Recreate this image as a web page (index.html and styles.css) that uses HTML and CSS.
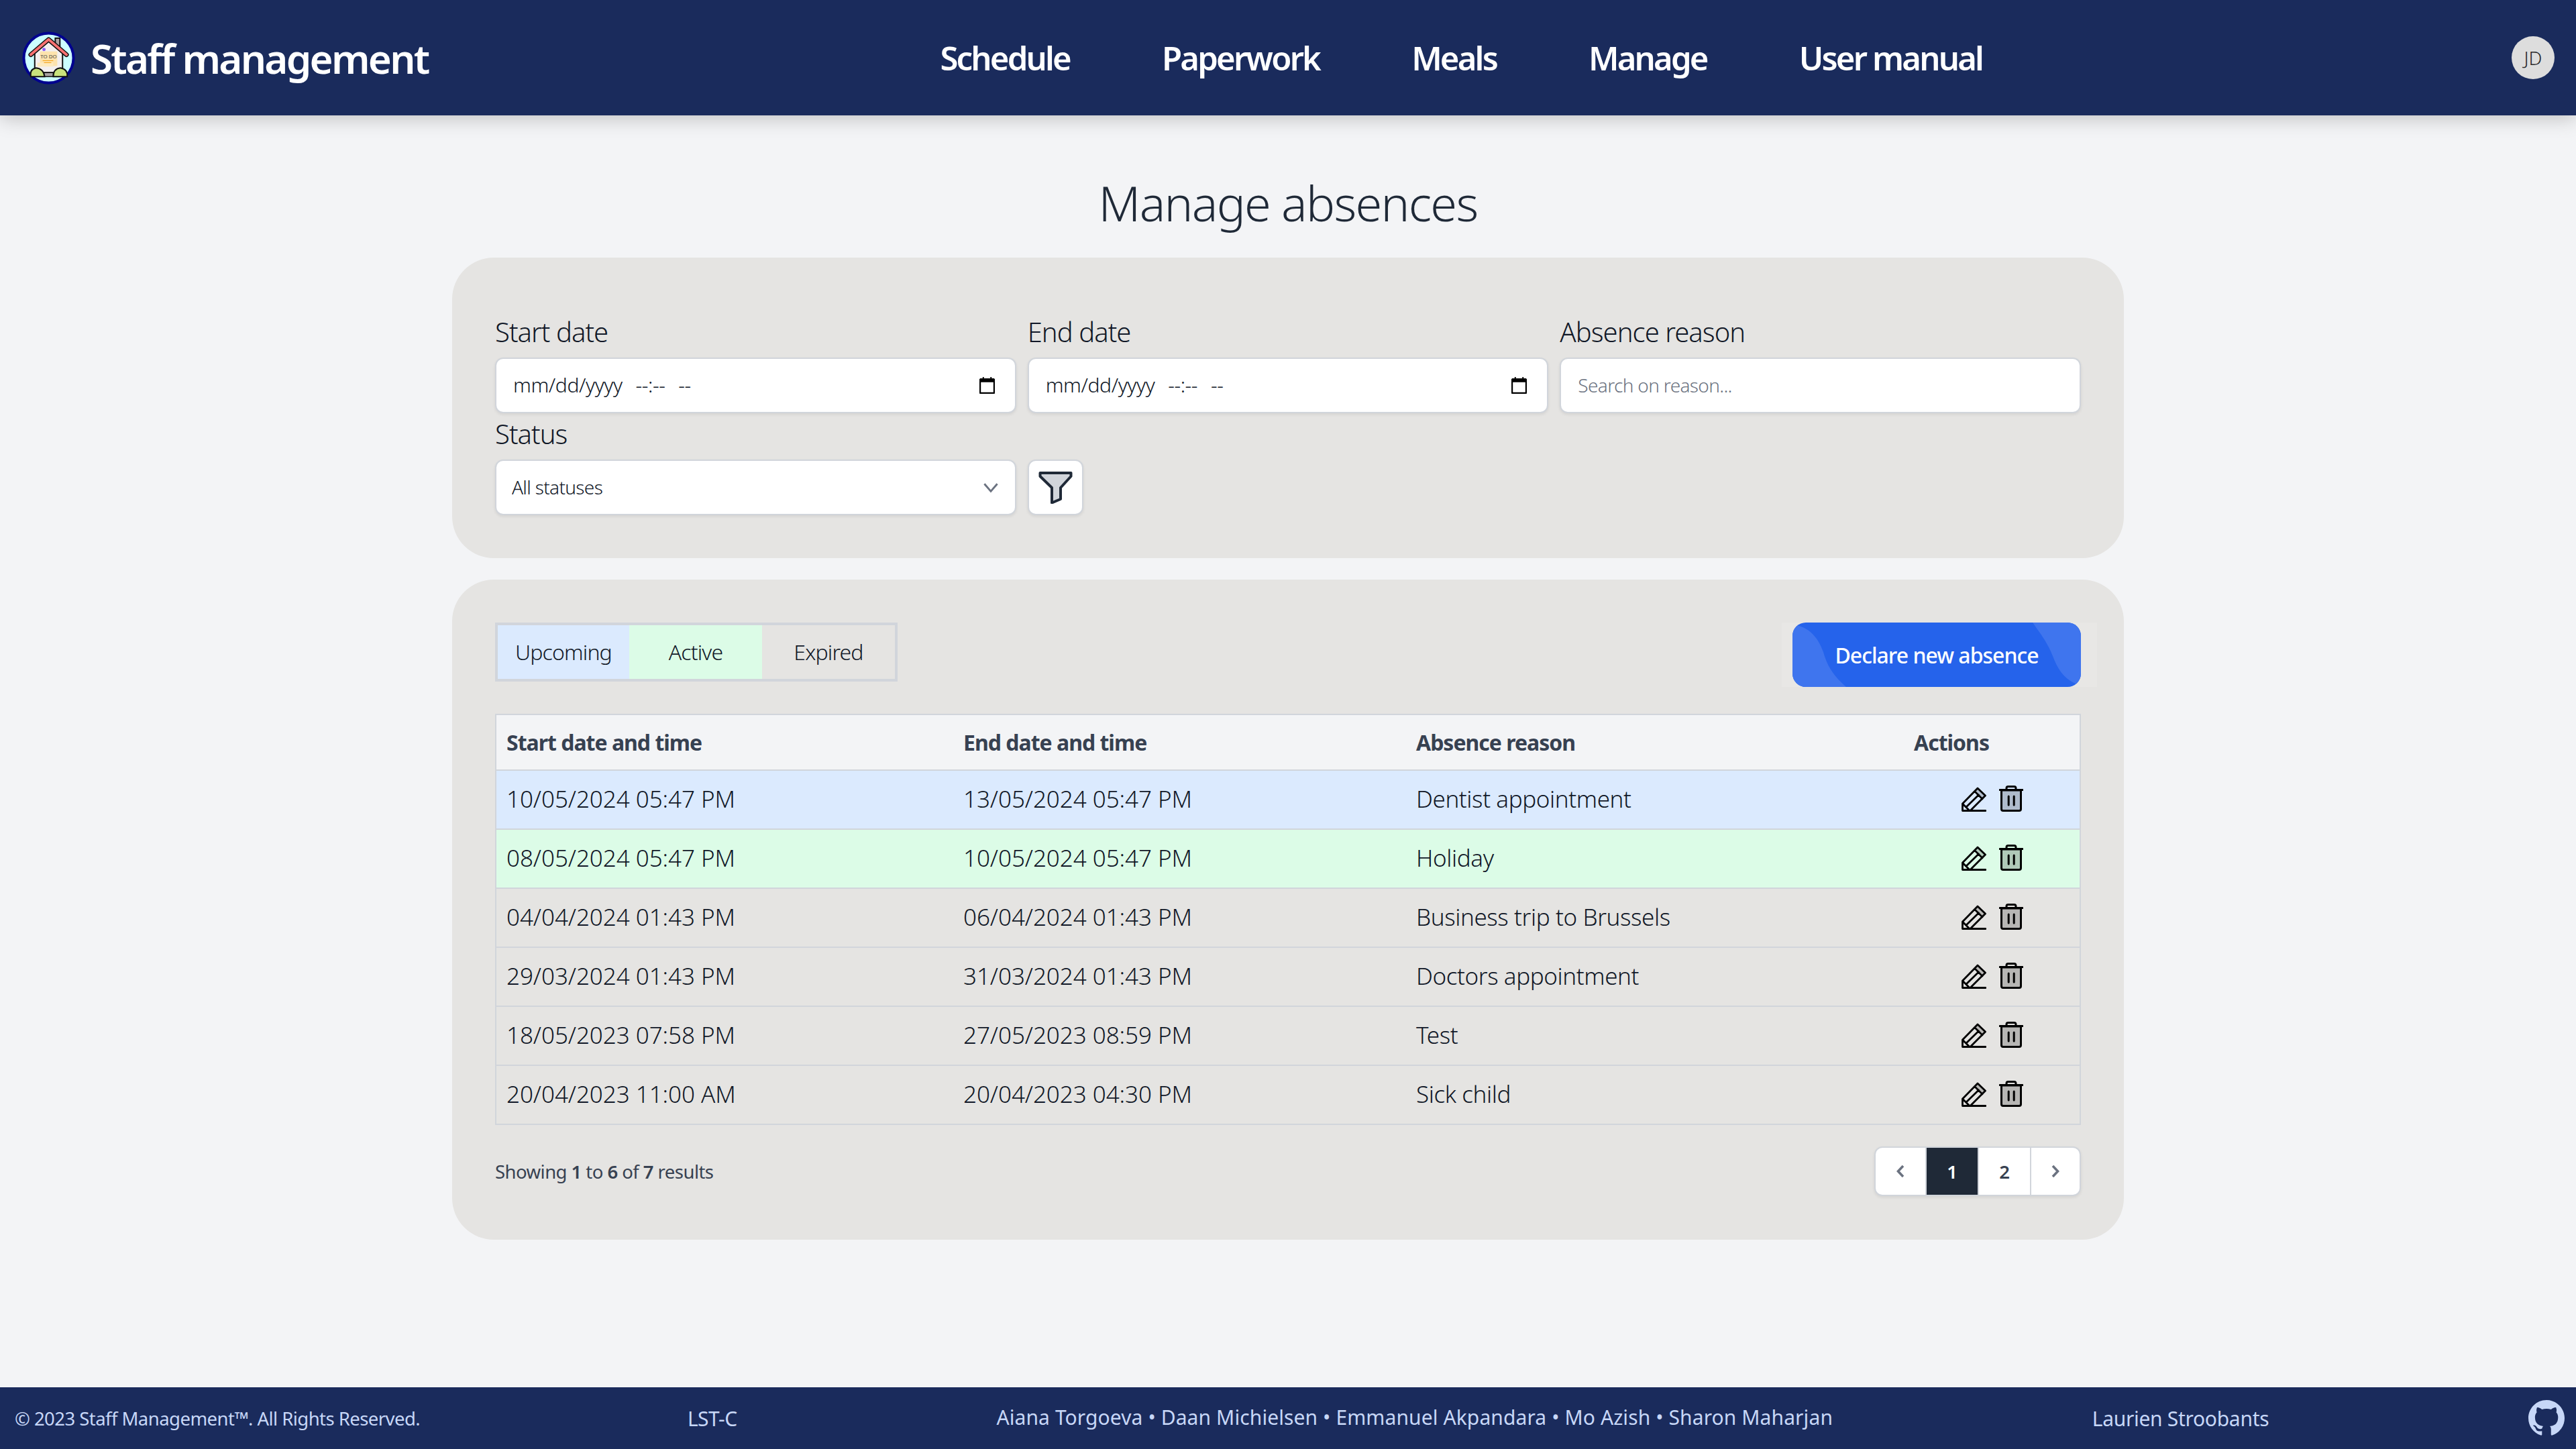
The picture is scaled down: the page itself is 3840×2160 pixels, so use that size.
FILE: index.html
```html
<!DOCTYPE html>
<html lang="en">
<head>
    <meta charset="UTF-8">
    <meta name="viewport" content="width=device-width, initial-scale=1.0">
    <title>Manage absences</title>
    <link rel="stylesheet" href="styles.css">
</head>
<body>
    <svg class="icon-defs" width="0" height="0">
        <symbol id="icon-pencil" viewBox="0 0 37 37">
            <path d="M24 2 L36 13 L31 18 L19.5 6.5Z" fill="rgba(0,0,0,0.2)"/>
            <path d="M1.5 25 L24 2 L35.5 13 L13 35.5 H1.5Z M19.5 6.5 L31 18 M7 30 L25.5 12 M1.5 25 L12 35.5 M13 35.5 H36" fill="none" stroke="#000" stroke-width="2.8" stroke-linejoin="round" stroke-linecap="round"/>
        </symbol>
        <symbol id="icon-trash" viewBox="0 0 36 39">
            <path d="M3.5 7 H32.5 V35 Q32.5 37.5 30 37.5 H6 Q3.5 37.5 3.5 35Z" fill="rgba(0,0,0,0.2)" stroke="#000" stroke-width="3" stroke-linejoin="round"/>
            <path d="M1 6.5 H35 M11 6.5 V4 Q11 1.5 13.5 1.5 H22.5 Q25 1.5 25 4 V6.5 M14.2 16 V29 M22.2 16 V29" fill="none" stroke="#000" stroke-width="3" stroke-linecap="round"/>
        </symbol>
        <symbol id="icon-calendar" viewBox="0 0 24 26">
            <path d="M1 4 H23 V24 Q23 25 22 25 H2 Q1 25 1 24Z" fill="none" stroke="#000" stroke-width="2.6"/>
            <path d="M1 2 H5 V0 H7 V2 H17 V0 H19 V2 H23 V8 H1Z" fill="#000"/>
        </symbol>
    </svg>

    <header class="topbar">
        <a class="brand" href="#">
            <svg class="brand-logo" viewBox="0 0 80 80">
                <circle cx="40" cy="40" r="37.5" fill="#ccffff" stroke="#000090" stroke-width="4"/>
                <rect x="50" y="10" width="7" height="22" fill="#b0a6a6" stroke="#111" stroke-width="2"/>
                <path d="M19 30 L40 13 L61 30 V62 H19Z" fill="#f3efef" stroke="#111" stroke-width="2"/>
                <path d="M13 35 L40 12 L67 35" fill="none" stroke="#111" stroke-width="7" stroke-linejoin="round" stroke-linecap="round"/>
                <path d="M13 35 L40 12 L67 35" fill="none" stroke="#f87171" stroke-width="4" stroke-linejoin="round" stroke-linecap="round"/>
                <rect x="27" y="30" width="26" height="22" fill="#fde3ad"/>
                <rect x="23" y="47" width="24" height="6" fill="#fdeac0"/>
                <circle cx="33" cy="27" r="2.5" fill="#8b5cf6"/>
                <text class="logo-text" x="40" y="40" text-anchor="middle">TO DO</text>
                <path d="M31 44 H47 M33 47 H44" stroke="#f59e0b" stroke-width="1"/>
                <rect x="33" y="62" width="14" height="6" fill="#a8a2a2" stroke="#111" stroke-width="1.5"/>
                <path d="M13 68 Q11 57 21 55 Q32 56 34 68Z M47 68 Q47 56 58 55 Q69 57 68 68Z" fill="#c9e27c" stroke="#111" stroke-width="2"/>
            </svg>
            <span class="brand-name">Staff management</span>
        </a>
        <nav class="main-nav">
            <a href="#">Schedule</a>
            <a href="#">Paperwork</a>
            <a href="#">Meals</a>
            <a href="#">Manage</a>
            <a href="#">User manual</a>
        </nav>
        <div class="avatar">JD</div>
    </header>

    <main class="page">
        <h1>Manage absences</h1>

        <section class="card filter-card">
            <div class="filter-grid">
                <div class="field">
                    <label for="start">Start date</label>
                    <div class="control-wrap">
                        <input id="start" class="control date-control" type="text" value="mm/dd/yyyy  --:--  --">
                        <svg class="calendar"><use href="#icon-calendar"/></svg>
                    </div>
                </div>
                <div class="field">
                    <label for="end">End date</label>
                    <div class="control-wrap">
                        <input id="end" class="control date-control" type="text" value="mm/dd/yyyy  --:--  --">
                        <svg class="calendar"><use href="#icon-calendar"/></svg>
                    </div>
                </div>
                <div class="field">
                    <label for="reason">Absence reason</label>
                    <input id="reason" class="control" type="text" placeholder="Search on reason...">
                </div>
                <div class="field">
                    <label for="status">Status</label>
                    <div class="control-wrap">
                        <select id="status" class="control">
                            <option>All statuses</option>
                        </select>
                        <svg class="select-arrow" viewBox="0 0 20 20"><path d="M4 7 L10 14 L16 7" fill="none" stroke="#6b7280" stroke-width="1.8"/></svg>
                    </div>
                </div>
                <div class="field filter-action">
                    <button class="filter-btn" type="button">
                        <svg viewBox="0 0 51 48" width="51" height="48"><path d="M2.5 2 H48.5 V7 L33 24 V41 L20 46.5 V24 L2.5 7Z" fill="#d1d5db" stroke="#1f2937" stroke-width="4" stroke-linejoin="round"/></svg>
                    </button>
                </div>
            </div>
        </section>

        <section class="card list-card">
            <div class="list-top">
                <div class="legend">
                    <span class="legend-item upcoming">Upcoming</span>
                    <span class="legend-item active">Active</span>
                    <span class="legend-item">Expired</span>
                </div>
                <div class="declare-wrap">
                    <button class="declare-btn" type="button">
                        <svg class="declare-waves" viewBox="0 0 430 96" preserveAspectRatio="none">
                            <path d="M0 3 C25 6 38 22 46 44 C52 66 62 80 80 96 L0 96Z M358 0 C372 20 380 30 388 50 C396 72 408 88 430 94 L430 0Z" fill="#3f75ee"/>
                        </svg>
                        <span>Declare new absence</span>
                    </button>
                </div>
            </div>

            <table class="absences">
                <colgroup>
                    <col class="col-start">
                    <col class="col-end">
                    <col class="col-reason">
                    <col class="col-actions">
                </colgroup>
                <thead>
                    <tr>
                        <th>Start date and time</th>
                        <th>End date and time</th>
                        <th>Absence reason</th>
                        <th>Actions</th>
                    </tr>
                </thead>
                <tbody>
                    <tr class="upcoming">
                        <td>10/05/2024 05:47 PM</td>
                        <td>13/05/2024 05:47 PM</td>
                        <td>Dentist appointment</td>
                        <td><div class="row-actions"><svg class="icon-edit"><use href="#icon-pencil"/></svg><svg class="icon-delete"><use href="#icon-trash"/></svg></div></td>
                    </tr>
                    <tr class="active">
                        <td>08/05/2024 05:47 PM</td>
                        <td>10/05/2024 05:47 PM</td>
                        <td>Holiday</td>
                        <td><div class="row-actions"><svg class="icon-edit"><use href="#icon-pencil"/></svg><svg class="icon-delete"><use href="#icon-trash"/></svg></div></td>
                    </tr>
                    <tr>
                        <td>04/04/2024 01:43 PM</td>
                        <td>06/04/2024 01:43 PM</td>
                        <td>Business trip to Brussels</td>
                        <td><div class="row-actions"><svg class="icon-edit"><use href="#icon-pencil"/></svg><svg class="icon-delete"><use href="#icon-trash"/></svg></div></td>
                    </tr>
                    <tr>
                        <td>29/03/2024 01:43 PM</td>
                        <td>31/03/2024 01:43 PM</td>
                        <td>Doctors appointment</td>
                        <td><div class="row-actions"><svg class="icon-edit"><use href="#icon-pencil"/></svg><svg class="icon-delete"><use href="#icon-trash"/></svg></div></td>
                    </tr>
                    <tr>
                        <td>18/05/2023 07:58 PM</td>
                        <td>27/05/2023 08:59 PM</td>
                        <td>Test</td>
                        <td><div class="row-actions"><svg class="icon-edit"><use href="#icon-pencil"/></svg><svg class="icon-delete"><use href="#icon-trash"/></svg></div></td>
                    </tr>
                    <tr>
                        <td>20/04/2023 11:00 AM</td>
                        <td>20/04/2023 04:30 PM</td>
                        <td>Sick child</td>
                        <td><div class="row-actions"><svg class="icon-edit"><use href="#icon-pencil"/></svg><svg class="icon-delete"><use href="#icon-trash"/></svg></div></td>
                    </tr>
                </tbody>
            </table>

            <div class="list-bottom">
                <p class="results">Showing <b>1</b> to <b>6</b> of <b>7</b> results</p>
                <div class="pager">
                    <a href="#"><svg viewBox="0 0 22 22" width="22" height="22"><path d="M15 3 L7.5 11 L15 19" fill="none" stroke="#6b7280" stroke-width="3.6"/></svg></a>
                    <a href="#" class="current">1</a>
                    <a href="#">2</a>
                    <a href="#"><svg viewBox="0 0 22 22" width="22" height="22"><path d="M7 3 L14.5 11 L7 19" fill="none" stroke="#6b7280" stroke-width="3.6"/></svg></a>
                </div>
            </div>
        </section>
    </main>

    <footer class="footer">
        <span class="copyright">© 2023 Staff Management™. All Rights Reserved.</span>
        <span class="course">LST-C</span>
        <span class="names">Aiana Torgoeva • Daan Michielsen • Emmanuel Akpandara • Mo Azish • Sharon Maharjan</span>
        <span class="teacher">Laurien Stroobants</span>
        <svg class="github" viewBox="0 0 16 16"><path d="M8 0C3.58 0 0 3.58 0 8c0 3.54 2.29 6.53 5.47 7.59.4.07.55-.17.55-.38 0-.19-.01-.82-.01-1.49-2.01.37-2.53-.49-2.69-.94-.09-.23-.48-.94-.82-1.13-.28-.15-.68-.52-.01-.53.63-.01 1.08.58 1.23.82.72 1.21 1.87.87 2.33.66.07-.52.28-.87.51-1.07-1.78-.2-3.64-.89-3.64-3.95 0-.87.31-1.59.82-2.15-.08-.2-.36-1.02.08-2.12 0 0 .67-.21 2.2.82.64-.18 1.32-.27 2-.27.68 0 1.36.09 2 .27 1.53-1.04 2.2-.82 2.2-.82.44 1.1.16 1.92.08 2.12.51.56.82 1.27.82 2.15 0 3.07-1.87 3.75-3.65 3.95.29.25.54.73.54 1.48 0 1.07-.01 1.93-.01 2.2 0 .21.15.46.55.38A8.013 8.013 0 0016 8c0-4.42-3.58-8-8-8z" fill="#c7d7f7"/></svg>
    </footer>
</body>
</html>
```

FILE: styles.css
```css
* {
    box-sizing: border-box;
    margin: 0;
    padding: 0;
}
html, body {
    height: 100%;
}
body {
    display: flex;
    flex-direction: column;
    min-height: 2160px;
    background-color: #f3f4f6;
    color: #111827;
    font-family: "Noto Sans", sans-serif;
    font-size: 35px;
    font-weight: 300;
}
a {
    color: inherit;
    text-decoration: none;
}
.icon-defs {
    position: absolute;
}

/* top bar */
.topbar {
    display: flex;
    justify-content: space-between;
    align-items: center;
    flex: none;
    height: 172px;
    padding: 0 32px 0 33px;
    background-color: #1a2b5c;
    color: white;
    box-shadow: 0 4px 28px rgba(0,0,0,0.22);
}
.brand {
    display: flex;
    align-items: center;
    gap: 23px;
}
.brand-logo {
    width: 79px;
    height: 79px;
}
.logo-text {
    font-size: 8px;
    font-weight: 400;
    fill: #444;
}
.brand-name {
    padding-top: 2px;
    font-size: 60px;
    font-weight: 600;
    letter-spacing: -2.7px;
}
.main-nav {
    display: flex;
    gap: 137px;
    margin-right: 26px;
    font-size: 49px;
    font-weight: 600;
    letter-spacing: -2.8px;
}
.avatar {
    display: flex;
    align-items: center;
    justify-content: center;
    width: 64px;
    height: 64px;
    border-radius: 50%;
    background-color: #ddd;
    color: #2a2a2a;
    font-size: 28px;
}

/* page */
.page {
    flex: 1;
    width: 2492px;
    margin: 0 auto;
}
h1 {
    height: 212px;
    padding-top: 79px;
    color: #1f2937;
    font-size: 72px;
    font-weight: 300;
    letter-spacing: -1.7px;
    line-height: 102px;
    text-align: center;
}
.card {
    padding: 64px;
    border-radius: 62px;
    background-color: #e5e4e2;
}
.filter-card {
    height: 448px;
    margin-bottom: 32px;
    padding-top: 84px;
}
.filter-grid {
    display: grid;
    grid-template-columns: repeat(3, 1fr);
    column-gap: 17px;
    row-gap: 4px;
}
.field label {
    display: block;
    height: 65px;
    font-size: 40px;
    letter-spacing: -0.95px;
    line-height: 54px;
}
.control {
    width: 100%;
    height: 83px;
    padding: 0 25px 2px;
    border: 2px solid #d1d5db;
    border-radius: 12px;
    background-color: white;
    color: #111827;
    font-family: inherit;
    font-size: 28px;
    font-weight: 300;
    letter-spacing: -0.65px;
    box-shadow: 0 2px 4px rgba(0,0,0,0.08);
}
.control::placeholder {
    color: #6b7280;
}
.date-control {
    font-size: 30px;
    letter-spacing: -0.4px;
    word-spacing: 2.5px;
}
select.control {
    padding: 0 23px 2px;
    appearance: none;
}
.control-wrap {
    position: relative;
}
.calendar {
    position: absolute;
    top: 29px;
    right: 32px;
    width: 23px;
    height: 25px;
}
.select-arrow {
    position: absolute;
    top: 25px;
    right: 22px;
    width: 32px;
    height: 32px;
}
.filter-action {
    display: flex;
    align-items: flex-end;
}
.filter-btn {
    display: flex;
    align-items: center;
    justify-content: center;
    width: 83px;
    height: 83px;
    border: 2px solid #d1d5db;
    border-radius: 12px;
    background-color: white;
    box-shadow: 0 2px 4px rgba(0,0,0,0.08);
}

/* list */
.list-card {
    height: 984px;
}
.list-top {
    display: flex;
    justify-content: space-between;
    align-items: flex-start;
    height: 136px;
}
.legend {
    display: flex;
    border: 4px solid #d1d5db;
}
.legend-item {
    width: 198px;
    font-size: 32px;
    letter-spacing: -0.85px;
    line-height: 80px;
    text-align: center;
}
.legend-item.upcoming {
    width: 196px;
    background-color: #dbeafe;
}
.legend-item.active {
    background-color: #dcfce7;
}
.declare-wrap {
    margin-right: -24px;
    padding: 0 24px 0 16px;
    background-color: #e8e7e5;
}
.declare-btn {
    position: relative;
    display: block;
    width: 430px;
    height: 96px;
    overflow: hidden;
    border: none;
    border-radius: 20px;
    background-color: #2563eb;
    color: white;
    font-family: inherit;
    font-size: 32px;
    font-weight: 500;
    letter-spacing: -1px;
}
.declare-waves {
    position: absolute;
    top: 0;
    left: 0;
    width: 100%;
    height: 100%;
}
.declare-btn span {
    position: relative;
}
.absences {
    width: 100%;
    table-layout: fixed;
    border-collapse: collapse;
    border: 2px solid #d1d5db;
}
.col-start { width: 680px; }
.col-end { width: 675px; }
.col-reason { width: 742px; }
th, td {
    padding: 0 0 0 17px;
    border-bottom: 2px solid #d1d5db;
    text-align: left;
}
th:first-child, td:first-child {
    padding-left: 15px;
}
th {
    height: 83px;
    background-color: #f3f4f6;
    color: #374151;
    font-size: 32px;
    font-weight: 700;
    letter-spacing: -1px;
}
td {
    height: 88px;
    padding-bottom: 4px;
    letter-spacing: -0.05px;
}
td:nth-child(3) {
    letter-spacing: -0.4px;
}
tr.upcoming td {
    background-color: #dbeafe;
}
tr.active td {
    background-color: #dcfce7;
}
.row-actions {
    display: flex;
    justify-content: center;
    align-items: center;
    gap: 19px;
    padding-right: 14px;
}
.icon-edit {
    width: 37px;
    height: 37px;
    margin-top: 2px;
}
.icon-delete {
    width: 36px;
    height: 39px;
}
.list-bottom {
    display: flex;
    justify-content: space-between;
    align-items: center;
    margin-top: 32px;
}
.results {
    color: #374151;
    font-size: 27.5px;
    font-weight: 400;
    letter-spacing: -0.55px;
}
.results b {
    font-weight: 600;
}
.pager {
    display: flex;
    height: 74px;
    overflow: hidden;
    border: 2px solid #d1d5db;
    border-radius: 12px;
    background-color: white;
    box-shadow: 0 2px 4px rgba(0,0,0,0.08);
    font-size: 27.5px;
    font-weight: 600;
    color: #374151;
}
.pager a {
    display: flex;
    align-items: center;
    justify-content: center;
    width: 78px;
    border-right: 2px solid #d1d5db;
}
.pager a:last-child {
    width: 72px;
    border-right: none;
}
.pager a:first-child {
    width: 76px;
}
.pager .current {
    background-color: #1f2937;
    color: white;
}

/* footer */
.footer {
    display: flex;
    justify-content: space-between;
    align-items: center;
    flex: none;
    height: 92px;
    padding: 0 17px 0 22px;
    background-color: #1a2b5c;
    color: #c7d7f7;
    font-size: 30px;
    font-weight: 400;
}
.copyright {
    margin-right: 12px;
    font-size: 27.5px;
    letter-spacing: -0.55px;
}
.course {
    letter-spacing: -0.5px;
}
.names {
    margin-bottom: 3px;
    letter-spacing: 0.1px;
}
.teacher {
    letter-spacing: -0.3px;
}
.github {
    width: 54px;
    height: 54px;
}
```
